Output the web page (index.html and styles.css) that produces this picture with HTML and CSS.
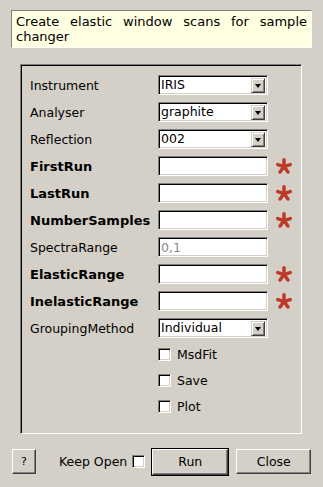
FILE: index.html
```html
<!DOCTYPE html>
<html lang="en">
<head>
    <meta charset="UTF-8">
    <title>ElasticWindowMultiple input dialog</title>
    <link rel="stylesheet" href="styles.css">
</head>
<body>
  <div class="dialog">
    <p class="description">Create elastic window scans for sample changer</p>

    <div class="group-box">
      <div class="prop-row">
        <label class="prop-label">Instrument</label>
        <div class="combo"><span class="combo-text">IRIS</span><span class="combo-arrow"></span></div>
      </div>
      <div class="prop-row">
        <label class="prop-label">Analyser</label>
        <div class="combo"><span class="combo-text">graphite</span><span class="combo-arrow"></span></div>
      </div>
      <div class="prop-row">
        <label class="prop-label">Reflection</label>
        <div class="combo"><span class="combo-text">002</span><span class="combo-arrow"></span></div>
      </div>
      <div class="prop-row">
        <label class="prop-label required">FirstRun</label>
        <input class="text-field" type="text">
        <svg class="star" viewBox="0 0 16 16"><use href="#star"/></svg>
      </div>
      <div class="prop-row">
        <label class="prop-label required">LastRun</label>
        <input class="text-field" type="text">
        <svg class="star" viewBox="0 0 16 16"><use href="#star"/></svg>
      </div>
      <div class="prop-row">
        <label class="prop-label required">NumberSamples</label>
        <input class="text-field" type="text">
        <svg class="star" viewBox="0 0 16 16"><use href="#star"/></svg>
      </div>
      <div class="prop-row">
        <label class="prop-label">SpectraRange</label>
        <input class="text-field" type="text" placeholder="0,1">
      </div>
      <div class="prop-row">
        <label class="prop-label required">ElasticRange</label>
        <input class="text-field" type="text">
        <svg class="star" viewBox="0 0 16 16"><use href="#star"/></svg>
      </div>
      <div class="prop-row">
        <label class="prop-label required">InelasticRange</label>
        <input class="text-field" type="text">
        <svg class="star" viewBox="0 0 16 16"><use href="#star"/></svg>
      </div>
      <div class="prop-row">
        <label class="prop-label">GroupingMethod</label>
        <div class="combo"><span class="combo-text">Individual</span><span class="combo-arrow"></span></div>
      </div>
      <div class="check-row"><span class="check-box"></span>MsdFit</div>
      <div class="check-row"><span class="check-box"></span>Save</div>
      <div class="check-row"><span class="check-box"></span>Plot</div>
    </div>

    <div class="button-bar">
      <button class="btn help-btn">?</button>
      <span class="keep-open">Keep Open</span>
      <span class="check-box"></span>
      <div class="default-frame"><button class="btn run-btn">Run</button></div>
      <button class="btn close-btn">Close</button>
    </div>
  </div>

  <!-- red mandatory marker, reused by every required row -->
  <svg width="0" height="0" style="position:absolute">
    <defs>
      <g id="star" stroke="#bd3a29" stroke-width="3.5" stroke-linecap="round">
        <line x1="8" y1="8.6" x2="8" y2="1.8"/>
        <line x1="8" y1="8.6" x2="14.2" y2="6.6"/>
        <line x1="8" y1="8.6" x2="11.9" y2="14"/>
        <line x1="8" y1="8.6" x2="4.1" y2="14"/>
        <line x1="8" y1="8.6" x2="1.8" y2="6.6"/>
      </g>
    </defs>
  </svg>
</body>
</html>
```

FILE: styles.css
```css
html, body {
    margin: 0;
    padding: 0;
    background-color: #D4D0C8;
    font-family: 'DejaVu Sans', 'Bitstream Vera Sans', sans-serif;
    font-size: 12.5px;
    color: #000;
}

.dialog {
    width: 323px;
    height: 487px;
    padding-top: 10px;
    box-sizing: border-box;
}

/* Description */
.description {
    margin: 0 11px;
    padding: 3px 4px 3px 4px;
    height: 38px;
    box-sizing: border-box;
    background-color: #FFFFE1;
    border-top: 1px solid #808080;
    border-left: 1px solid #808080;
    border-right: 1px solid #FFFFFF;
    border-bottom: 1px solid #FFFFFF;
    text-align: justify;
    font-size: 13px;
    line-height: 15px;
}

/* Properties group */
.group-box {
    margin: 16px 21px 0 20px;
    height: 370px;
    box-sizing: border-box;
    padding: 10px 0 0 9px;
    border-top: 1px solid #808080;
    border-left: 1px solid #808080;
    border-right: 1px solid #FFFFFF;
    border-bottom: 1px solid #FFFFFF;
    box-shadow: inset 1px 1px 0 #000;
    display: flex;
    flex-direction: column;
    gap: 7px;
}

.prop-row {
    display: flex;
    align-items: center;
    height: 20px;
}

.prop-label {
    width: 128px;
    flex-shrink: 0;
    white-space: nowrap;
}

.prop-label.required {
    font-weight: bold;
    font-size: 13px;
}

.text-field,
.combo {
    width: 110px;
    height: 20px;
    box-sizing: border-box;
    margin: 0;
    padding: 0 2px;
    background-color: #FFFFFF;
    border-top: 1px solid #808080;
    border-left: 1px solid #808080;
    border-right: 1px solid #FFFFFF;
    border-bottom: 1px solid #FFFFFF;
    box-shadow: inset 1px 1px 0 #000, inset -1px -1px 0 #D4D0C8;
    font-family: inherit;
    font-size: 12.5px;
    outline: none;
}

.text-field::placeholder {
    color: #8A8A8A;
}

.combo {
    display: flex;
    align-items: center;
    padding: 0 2px 0 2px;
}

.combo-text {
    flex: 1;
    line-height: 16px;
}

.combo-arrow {
    position: relative;
    width: 14px;
    height: 15px;
    box-sizing: border-box;
    background-color: #D4D0C8;
    border-top: 1px solid #D4D0C8;
    border-left: 1px solid #D4D0C8;
    border-right: 1px solid #404040;
    border-bottom: 1px solid #404040;
    box-shadow: inset 1px 1px 0 #FFFFFF, inset -1px -1px 0 #808080;
}

.combo-arrow::after {
    content: "";
    position: absolute;
    left: 3px;
    top: 5px;
    border-left: 3px solid transparent;
    border-right: 3px solid transparent;
    border-top: 4px solid #000;
}

.star {
    width: 16px;
    height: 16px;
    margin-left: 8px;
}

/* Check boxes */
.check-row {
    display: flex;
    align-items: center;
    height: 19px;
    padding-left: 128px;
}

.check-box {
    display: inline-block;
    width: 13px;
    height: 13px;
    box-sizing: border-box;
    background-color: #FFFFFF;
    border-top: 1px solid #808080;
    border-left: 1px solid #808080;
    border-right: 1px solid #FFFFFF;
    border-bottom: 1px solid #FFFFFF;
    box-shadow: inset 1px 1px 0 #000, inset -1px -1px 0 #D4D0C8;
}

.check-row .check-box {
    margin-right: 6px;
}

/* Bottom buttons */
.button-bar {
    display: flex;
    align-items: center;
    margin-top: 13px;
    padding-left: 12px;
    height: 29px;
}

.btn {
    box-sizing: border-box;
    margin: 0;
    padding: 0;
    background-color: #D4D0C8;
    border-top: 1px solid #FFFFFF;
    border-left: 1px solid #FFFFFF;
    border-right: 1px solid #404040;
    border-bottom: 1px solid #404040;
    box-shadow: inset -1px -1px 0 #808080;
    font-family: inherit;
    font-size: 12.5px;
    color: #000;
}

.help-btn {
    width: 24px;
    height: 25px;
    font-size: 11px;
}

.keep-open {
    margin-left: 23px;
    margin-right: 5px;
}

.default-frame {
    margin-left: 6px;
    border: 1px solid #000;
    display: flex;
}

.run-btn {
    width: 76px;
    height: 26px;
}

.close-btn {
    margin-left: 7px;
    width: 75px;
    height: 25px;
}
```
